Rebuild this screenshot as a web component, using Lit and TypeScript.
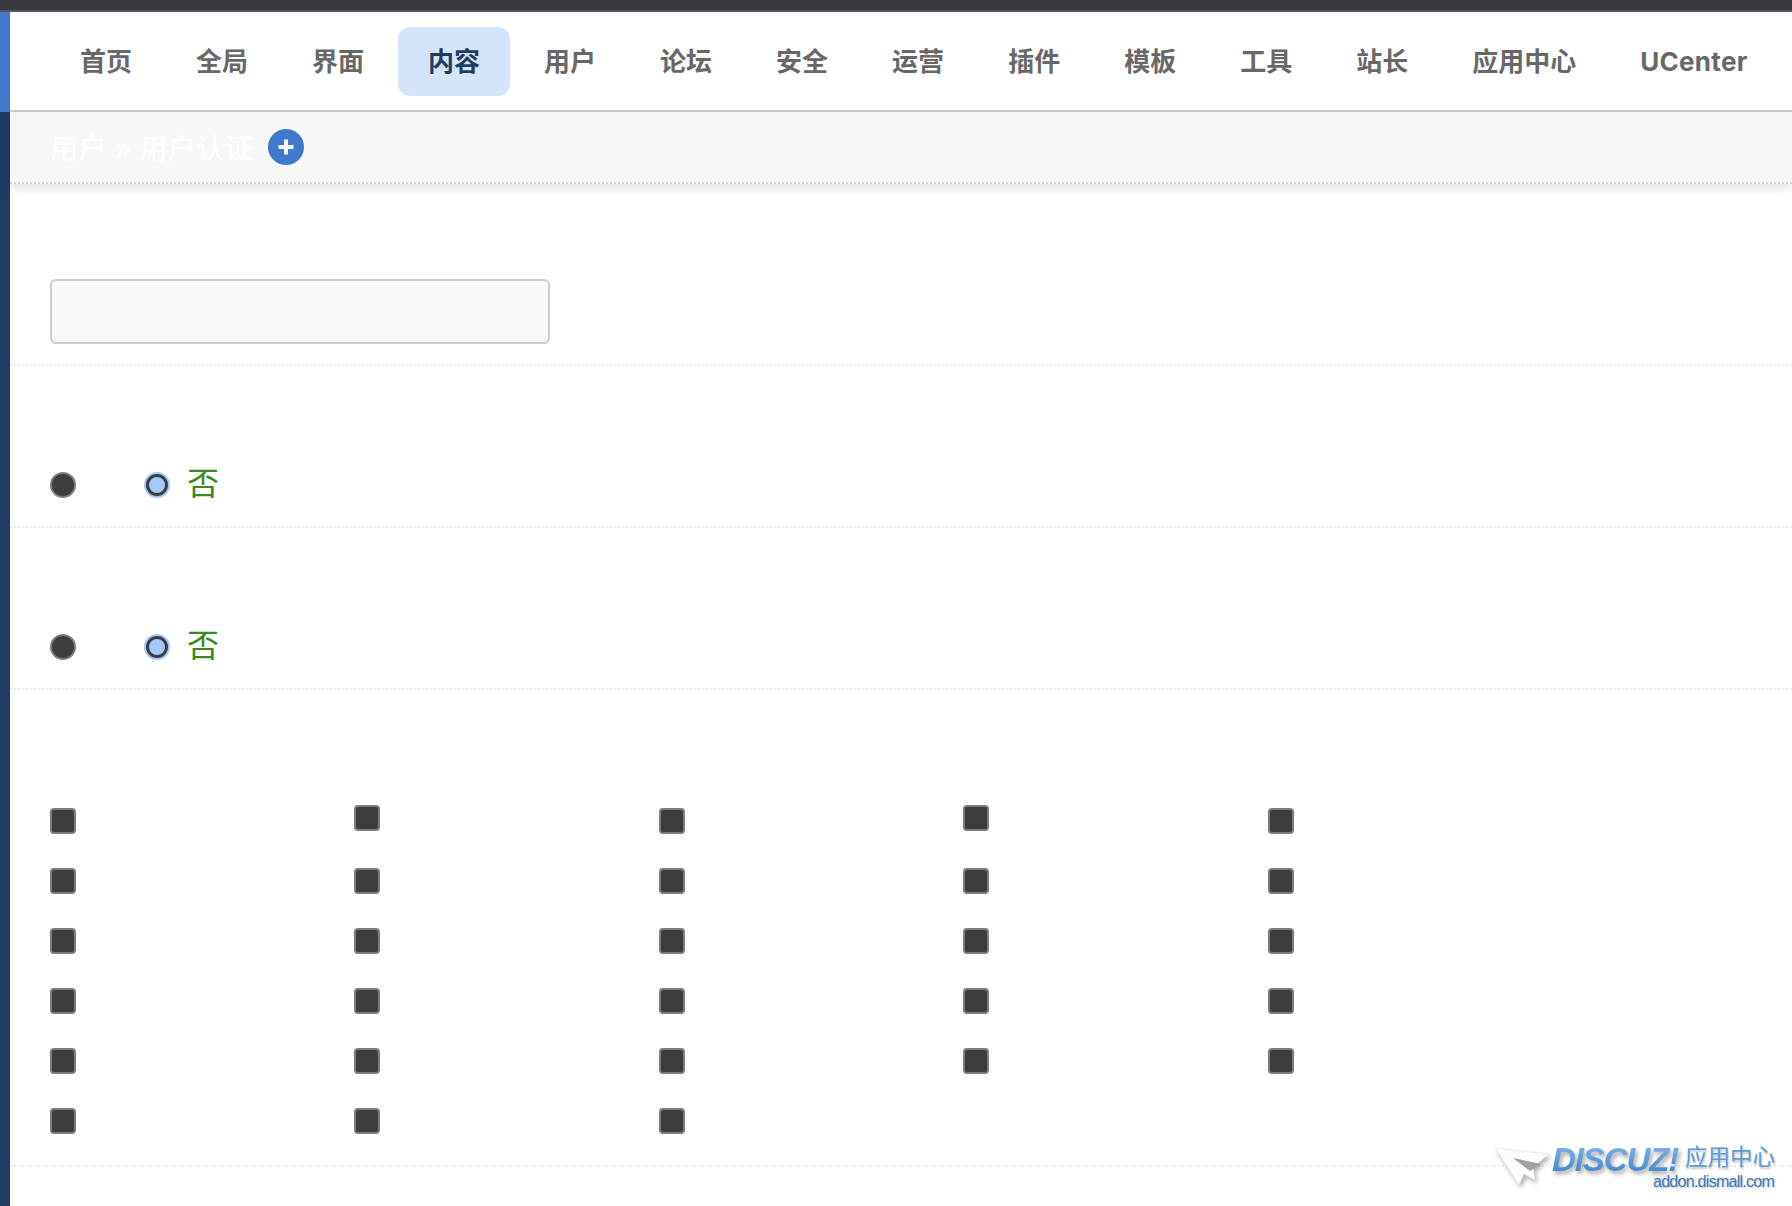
import { LitElement, html, css } from "lit";
import { customElement } from "lit/decorators.js";

const NAV = ["首页", "全局", "界面", "内容", "用户", "论坛", "安全", "运营", "插件", "模板", "工具", "站长", "应用中心", "UCenter"];
const COUNTS = 28;

@customElement("app-root")
export class AppRoot extends LitElement {
  static styles = css`
    :host { display: block; position: relative; width: 100%; height: 1206px; overflow: hidden; background: #fff;
      font-family: Inter, "Noto Sans CJK SC", sans-serif; }
    .top { height: 10px; background: #36373c; border-bottom: 2px solid #55565b; }
    .frame { display: grid; grid-template-columns: 10px 1fr; height: 1194px; }
    .side { display: flex; flex-direction: column; }
    .side-a { height: 100px; background: #4078cb; }
    .side-b { flex: 1; background: #1f3a63; }
    .nav { height: 98px; border-bottom: 2px solid #ccc; display: flex; align-items: center; gap: 4px; padding-left: 40px; box-sizing: content-box; }
    .nav a { height: 69px; line-height: 69px; padding: 0 30px; border-radius: 12px; font-size: 26px; font-weight: 700; color: #686868; white-space: nowrap;
      font-family: Inter, "Noto Sans CJK SC", sans-serif; }
    .nav a.on { background: #d4e4fa; color: #1f3a63; }
    .nav a.latin { letter-spacing: .3px; }
    .crumb { height: 72px; box-sizing: border-box; background: #f7f7f7; border-bottom: 2px dotted #ccd6e6; box-shadow: 0 5px 9px rgba(0,0,0,.1);
      display: flex; align-items: center; padding-left: 40px; gap: 15px; position: relative; }
    .crumb span { font-size: 28px; letter-spacing: .3px; color: #fff; font-family: Inter, "Noto Sans CJK SC", sans-serif; }
    .plus { width: 36px; height: 36px; display: block; }
    .row { border-bottom: 2px dotted #e3eefb; padding-left: 40px; box-sizing: border-box; display: flex; }
    .r1 { height: 182px; align-items: flex-end; padding-bottom: 20px; }
    .r2 { height: 162px; align-items: flex-end; padding-bottom: 28px; }
    .r3 { height: 477px; display: grid; grid-template-columns: repeat(5, 304.4px); grid-auto-rows: 60px; padding-top: 101px; align-items: center; }
    .input { width: 500px; height: 65px; box-sizing: border-box; background: #f9f9f9; border: 2px solid #ccc; border-radius: 6px; }
    .radio { width: 26px; height: 26px; box-sizing: border-box; border-radius: 50%; background: #3c3c3c; border: 2px solid #7d7d7d; flex: none; }
    .radio.on { background: #a3c8fb; border: 3px solid #3c3c3c; box-shadow: 0 0 0 2px #a3c8fb; width: 22px; height: 22px; margin: 2px 0 2px 70px; }
    .no { color: #3a8a1f; font-size: 32px; line-height: 26px; margin-left: 19px; margin-bottom: 4px; font-family: "Noto Sans CJK SC", sans-serif; }
    .check { width: 26px; height: 26px; box-sizing: border-box; background: #3c3c3c; border: 2px solid #7d7d7d; border-radius: 4px; }
    .check.up { margin-top: -6px; }
    .mark { position: absolute; left: 1495px; top: 1144px; width: 285px; height: 48px; }
    .plane { position: absolute; left: 0; top: 3px; filter: drop-shadow(2px 3px 2px rgba(0,0,0,.3)); }
    .dz { position: absolute; left: 57px; top: 0; font: italic 900 33px/32px "Liberation Sans", sans-serif; letter-spacing: -1.1px;
      background: linear-gradient(180deg, #7fb4ea, #3f82c8); -webkit-background-clip: text; background-clip: text; color: transparent;
      filter: drop-shadow(2px 3px 2px rgba(0,0,0,.35)); padding-right: 4px; }
    .cn { position: absolute; left: 190px; top: -2px; font: 400 22.5px/26px "Noto Sans CJK SC", sans-serif; color: #5b9ad9; text-shadow: 1px 2px 2px rgba(0,0,0,.25); }
    .url { position: absolute; left: 158px; top: 28px; font: 400 16px/20px "Liberation Sans", sans-serif; letter-spacing: -.72px; color: #3d78b8; text-shadow: 1px 1px 2px rgba(0,0,0,.25); white-space: nowrap; }
  `;

  yesno() {
    return html`<div class="radio"></div><div class="radio on"></div><div class="no">否</div>`;
  }

  render() {
    return html`
      <div class="top"></div>
      <div class="frame">
        <div class="side"><div class="side-a"></div><div class="side-b"></div></div>
        <div>
          <div class="nav">${NAV.map((n) => html`<a class="${n === "内容" ? "on" : ""} ${n === "UCenter" ? "latin" : ""}">${n}</a>`)}</div>
          <div class="crumb">
            <span>用户 » 用户认证</span>
            <svg class="plus" viewBox="0 0 36 36"><circle cx="18" cy="18" r="18" fill="#4078cb"/><path d="M18 10.5v15M10.5 18h15" stroke="#fff" stroke-width="4"/></svg>
          </div>
          <div class="row r1"><div class="input"></div></div>
          <div class="row r2">${this.yesno()}</div>
          <div class="row r2">${this.yesno()}</div>
          <div class="row r3">
            ${Array.from({ length: COUNTS }, (_, i) => html`<div class="check ${i === 1 || i === 3 ? "up" : ""}"></div>`)}
          </div>
        </div>
      </div>
      <div class="mark">
        <svg class="plane" width="56" height="42" viewBox="0 0 56 42">
          <polygon points="0,1 54,7 38,20 40,33 29,27 24,38" fill="#fbfbfb" stroke="#e2e2e2" stroke-width=".6"/>
          <polygon points="18,11 46,17 35,24" fill="#a0a0a0"/>
        </svg>
        <div class="dz">DISCUZ!</div>
        <div class="cn">应用中心</div>
        <div class="url">addon.dismall.com</div>
      </div>
    `;
  }
}
